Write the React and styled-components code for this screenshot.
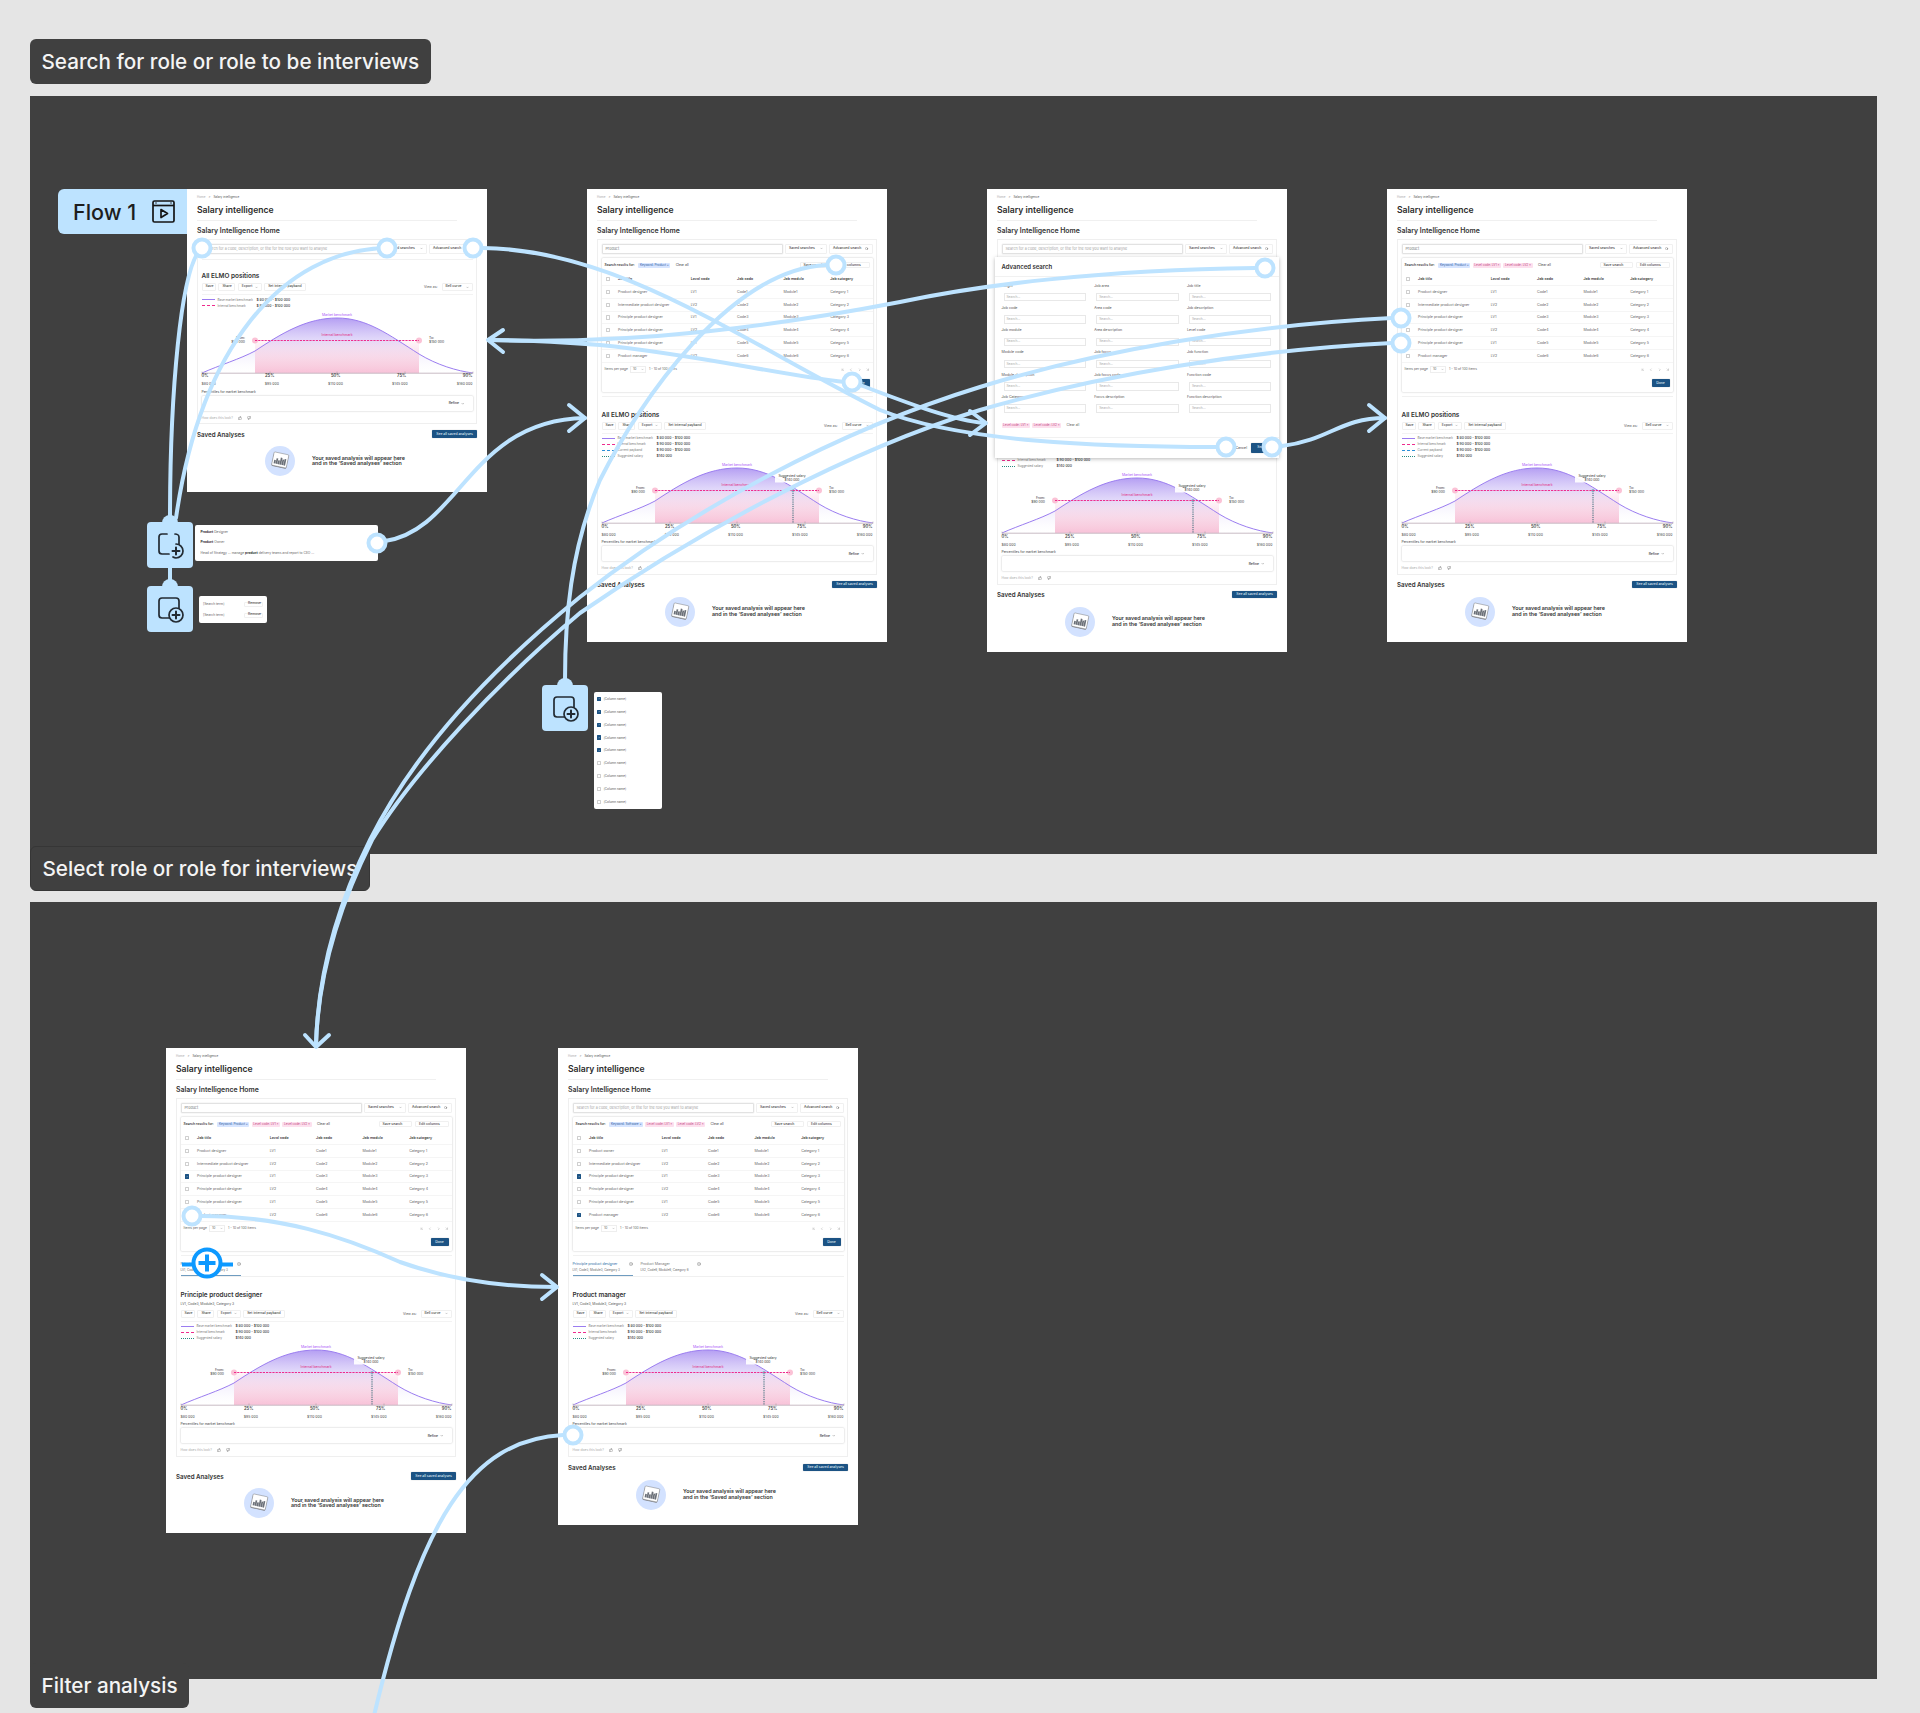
import React from 'react';
import styled, { createGlobalStyle, css } from 'styled-components';
import {
  ChevronDown, ChevronFirst, ChevronLast, ChevronLeft, ChevronRight,
  CircleX, Search, ThumbsDown, ThumbsUp, Check,
} from 'lucide-react';

const BLUE = '#BDE3FF';
const NAVY = '#1c5384';

const GlobalStyle = createGlobalStyle`
  html, body { margin: 0; padding: 0; background: #e5e5e5; }
  * { box-sizing: border-box; }
  body { font-family: Inter, "Liberation Sans", sans-serif; }
`;

const Page = styled.div`
  position: relative;
  width: 1920px;
  height: 1713px;
  padding-top: 39px;
  overflow: hidden;
  background: #e5e5e5;
`;

const SectionLabel = styled.div`
  position: relative;
  z-index: 2;
  width: fit-content;
  height: 45px;
  margin: ${props => props.$margin};
  padding: 0 11.5px;
  display: flex;
  align-items: center;
  background: #404040;
  border-radius: 6px;
  color: #f4f4f4;
  font-size: 20.7px;
  font-weight: 500;
  ${props => props.$edge && css`border: 1px solid #363636;`}
`;

const Section = styled.section`
  position: relative;
  margin-left: 30px;
  width: 1847px;
  height: ${props => props.$height}px;
  padding: ${props => props.$pad};
  display: flex;
  align-items: flex-start;
  gap: ${props => props.$gap}px;
  background: #404040;
`;

const Frame = styled.article`
  position: relative;
  flex-shrink: 0;
  width: 300px;
  padding: 6px 10px ${props => props.$bottom || 15}px;
  background: #fff;
  color: #2e2e2e;
`;

const Crumbs = styled.div`
  height: 4px;
  display: flex;
  align-items: center;
  gap: 3px;
  font-size: 3px;
  line-height: 4px;
  color: #555;
  span:first-child { color: #aaa; }
`;

const Title = styled.h1`
  margin: 6px 0 0;
  font-size: 8.6px;
  line-height: 10px;
  font-weight: 600;
  color: #2b2b2b;
`;

const Rule = styled.div`
  margin-top: 5px;
  width: 260px;
  height: 1px;
  background: #f0f0f0;
`;

const Subtitle = styled.h2`
  margin: 5.5px 0 0;
  font-size: 6.9px;
  line-height: 8px;
  font-weight: 600;
  color: #333;
`;

const Panel = styled.div`
  margin-top: 4.5px;
  width: 280px;
  padding: 3.5px;
  border: 1px solid #efefef;
`;

const SearchRow = styled.div`
  display: flex;
  gap: 2.5px;
  height: 10px;
`;

const SearchInput = styled.div`
  flex: 1;
  display: flex;
  align-items: center;
  padding-left: 3px;
  border: 1px solid #e2e2e2;
  border-radius: 1px;
  box-shadow: 0 0 1px rgba(0, 0, 0, .3);
  font-size: 3.7px;
  color: ${props => (props.$filled ? '#777' : '#a5a5a5')};
`;

const GhostButton = styled.button`
  flex: none;
  display: inline-flex;
  align-items: center;
  justify-content: space-between;
  gap: 1.5px;
  width: ${props => (props.$width ? `${props.$width}px` : 'auto')};
  height: ${props => props.$height || 8}px;
  padding: 0 3px;
  background: #fff;
  border: 1px solid #f0f0f0;
  border-radius: 1px;
  font: 500 3.4px/1 Inter, sans-serif;
  color: #444;
`;

const ResultsCard = styled.div`
  margin-top: 4px;
  height: 134px;
  border-radius: 1px;
  box-shadow: 0 0 2px rgba(0, 0, 0, .28);
`;

const ResultsHead = styled.div`
  height: 15.5px;
  padding: 0 3px;
  display: flex;
  align-items: center;
  gap: 2.3px;
  font-size: 3.4px;
  color: #444;
  b { font-weight: 600; margin-right: 1.5px; }
`;

const ClearAll = styled.span`
  margin-left: 3px;
`;

const Chip = styled.span`
  height: 5px;
  padding: 0 1.5px;
  display: inline-flex;
  align-items: center;
  font-size: 3.1px;
  border-radius: 1px;
  background: ${props => (props.$kind === 'blue' ? '#d7e5ff' : '#fde0ee')};
  color: ${props => (props.$kind === 'blue' ? '#2c5aa0' : '#c2477f')};
`;

const HeadRight = styled.div`
  margin-left: auto;
  display: flex;
  gap: 3px;
`;

const TableRow = styled.div`
  height: 12.85px;
  display: grid;
  grid-template-columns: 16.6px 72.7px 46.3px 46.4px 46.7px 1fr;
  align-items: center;
  border-bottom: 1px solid #f5f5f5;
  font-size: 3.6px;
  font-weight: ${props => (props.$head ? 600 : 400)};
  color: ${props => (props.$head ? '#444' : '#666')};
`;

const Box = styled.span`
  display: inline-flex;
  align-items: center;
  justify-content: center;
  width: 4.2px;
  height: 4.2px;
  margin-left: ${props => props.$inset || 0}px;
  border: 1px solid ${props => (props.$on ? NAVY : '#cfcfcf')};
  border-radius: .6px;
  background: ${props => (props.$on ? NAVY : '#fff')};
  color: #fff;
`;

const Pagination = styled.div`
  height: 13px;
  padding: 0 3px;
  display: flex;
  align-items: center;
  gap: 2.5px;
  font-size: 3.3px;
  color: #666;
`;

const PageSize = styled.span`
  width: 16px;
  height: 7px;
  padding: 0 1.5px;
  display: inline-flex;
  align-items: center;
  justify-content: space-between;
  border: 1px solid #eee;
`;

const Pager = styled.div`
  margin-left: auto;
  display: flex;
  gap: 4.8px;
  color: #777;
`;

const CardFoot = styled.div`
  padding: 3.5px 3px 0;
  display: flex;
  justify-content: flex-end;
`;

const SolidButton = styled.button`
  width: ${props => props.$width}px;
  height: ${props => props.$height || 8}px;
  padding: 0;
  border: 0;
  border-radius: 1px;
  background: ${NAVY};
  box-shadow: 0 0 1px rgba(0, 0, 0, .4);
  font: 500 3.4px/1 Inter, sans-serif;
  color: #dfe9f2;
`;

const PanelRule = styled.div`
  margin-top: ${props => props.$top}px;
  height: 1px;
  background: #f1f1f1;
`;

const TabRow = styled.div`
  display: flex;
  gap: 8px;
  padding-top: 6.5px;
  border-bottom: 1px solid #f0f0f0;
`;

const Tab = styled.div`
  position: relative;
  width: 60px;
  padding-bottom: 3px;
  border-bottom: 1px solid ${props => (props.$active ? '#6f9cc0' : 'transparent')};
  font-size: 3.6px;
  line-height: 4px;
  color: ${props => (props.$active ? '#2c6ea5' : '#777')};
  small { display: block; margin-top: 1.5px; font-size: 3px; line-height: 4px; color: #666; }
  svg { position: absolute; right: 0; top: 0; color: #666; }
`;

const Analysis = styled.div`
  padding-top: ${props => props.$top}px;
`;

const AnalysisTitle = styled.h3`
  margin: 0;
  font-size: 6.4px;
  line-height: 8px;
  font-weight: 600;
  color: #333;
`;

const AnalysisMeta = styled.div`
  margin-top: 3px;
  font-size: 3.4px;
  line-height: 4px;
  color: #555;
`;

const Toolbar = styled.div`
  margin-top: ${props => (props.$tight ? 4 : 3)}px;
  display: flex;
  align-items: center;
  gap: 2.4px;
  span { margin-left: auto; margin-right: 1.6px; font-size: 3.4px; color: #555; }
`;

const ToolRule = styled.div`
  margin-top: 3px;
  height: 1px;
  background: #f3f3f3;
`;

const Legend = styled.div`
  margin-top: 1.5px;
`;

const LegendRow = styled.div`
  height: 6px;
  display: grid;
  grid-template-columns: 16px 39px 1fr;
  align-items: center;
  font-size: 3.1px;
  color: #777;
  b { font-size: 3.4px; font-weight: 500; color: #333; }
`;

const LegendLine = styled.i`
  display: block;
  width: 13px;
  height: 0;
  border-top: 1px ${props => props.$dash} ${props => props.$color};
`;

const ChartSvg = styled.svg`
  display: block;
  overflow: visible;
  font-family: Inter, sans-serif;
`;

const Axis = styled.div`
  margin-top: ${props => props.$top}px;
  height: 4px;
  display: flex;
  justify-content: space-between;
  font-size: ${props => (props.$strong ? 4.2 : 3.5)}px;
  line-height: 4px;
  font-weight: ${props => (props.$strong ? 600 : 400)};
  color: #444;
`;

const Caption = styled.div`
  margin-top: 3.7px;
  font-size: 3.4px;
  line-height: 4px;
  color: #444;
`;

const RefineBox = styled.div`
  margin-top: 2.3px;
  height: 15px;
  padding-right: 8px;
  display: flex;
  align-items: center;
  justify-content: flex-end;
  gap: 2px;
  border-radius: 1px;
  box-shadow: 0 0 2px rgba(0, 0, 0, .28);
  font-size: 3.4px;
  font-weight: 500;
  color: #333;
`;

const Feedback = styled.div`
  margin-top: 5px;
  height: 4px;
  display: flex;
  align-items: center;
  gap: 5px;
  font-size: 3.3px;
  color: #aaa;
  svg { color: #666; }
`;

const SavedRow = styled.div`
  margin-top: ${props => props.$top}px;
  height: 7.5px;
  display: flex;
  align-items: center;
  justify-content: space-between;
  font-size: 6.2px;
  font-weight: 600;
  color: #333;
`;

const EmptyState = styled.div`
  margin-top: 8.5px;
  padding-left: 68px;
  display: flex;
  align-items: center;
  gap: 17px;
  font-size: 5.3px;
  line-height: 5.8px;
  font-weight: 600;
  color: #333;
`;

const AdvancedPopup = styled.div`
  position: absolute;
  left: 8px;
  top: 68px;
  width: 284px;
  height: 201px;
  background: #fff;
  box-shadow: 0 1px 4px rgba(0, 0, 0, .28);
`;

const PopupHead = styled.div`
  height: 20px;
  padding-left: 6.5px;
  display: flex;
  align-items: center;
  border-bottom: 1px solid #f1f1f1;
  font-size: 6px;
  font-weight: 600;
  color: #333;
`;

const PopupGrid = styled.div`
  padding: 6.5px 0 0 6.5px;
  display: grid;
  grid-template-columns: repeat(3, 92.7px);
  grid-auto-rows: 22.3px;
`;

const Field = styled.label`
  display: block;
  font-size: 3.6px;
  line-height: 5px;
  color: #555;
  div {
    margin: 4.5px 0 0 2px;
    width: 82.4px;
    height: 8.4px;
    padding-left: 2px;
    display: flex;
    align-items: center;
    border: 1px solid #e8e8e8;
    font-size: 3.3px;
    color: #aaa;
  }
`;

const PopupChips = styled.div`
  margin-top: 5.7px;
  padding-left: 6.5px;
  display: flex;
  align-items: center;
  gap: 2.2px;
  font-size: 3.3px;
  color: #555;
  span:last-child { margin-left: 3px; }
`;

const PopupFoot = styled.div`
  margin-top: 8.7px;
  height: 21px;
  padding: 5px 4px 0 0;
  display: flex;
  justify-content: flex-end;
  gap: 4px;
  border-top: 1px solid #f1f1f1;
  font-size: 3.5px;
  color: #444;
  span { line-height: 10px; }
`;

const FlowTag = styled.div`
  position: absolute;
  left: 28px;
  top: 93px;
  width: 129px;
  height: 45px;
  padding-left: 15px;
  display: flex;
  align-items: center;
  gap: 16px;
  background: ${BLUE};
  border-radius: 6px 0 0 6px;
  font-size: 21.5px;
  font-weight: 500;
  color: #1d1d1d;
`;

const Node = styled.div`
  position: absolute;
  left: ${props => props.$left}px;
  top: ${props => props.$top}px;
  width: 46px;
  height: 46px;
  background: ${BLUE};
  border-radius: 4px;
  &::before {
    content: '';
    position: absolute;
    left: 15px;
    top: -7px;
    width: 16px;
    height: 14px;
    border-radius: 8px 8px 0 0;
    background: ${BLUE};
  }
  svg { position: relative; display: block; }
`;

const Note = styled.div`
  position: absolute;
  left: ${props => props.$left}px;
  top: ${props => props.$top}px;
  width: ${props => props.$width}px;
  height: ${props => props.$height}px;
  padding-top: ${props => props.$padTop || 0}px;
  background: #fff;
  border-radius: 2px;
  font-size: 3.3px;
  color: #666;
`;

const MatchNote = styled(Note)`
  padding: 4.5px 5.5px;
  p { margin: 0 0 6.7px; line-height: 4px; }
  b { font-weight: 700; color: #333; }
`;

const TermRow = styled.div`
  height: 11px;
  padding: 0 4px 0 4px;
  display: flex;
  align-items: center;
  justify-content: space-between;
`;

const ColumnRow = styled.div`
  height: 12.85px;
  padding-left: 3px;
  display: flex;
  align-items: center;
  gap: 2.5px;
  font-size: 3.1px;
  color: #555;
`;

const Connectors = styled.svg`
  position: absolute;
  left: 0;
  top: 0;
  z-index: 5;
  pointer-events: none;
  fill: none;
  stroke: ${BLUE};
  stroke-width: 4;
  stroke-linecap: round;
  stroke-linejoin: round;
`;

const ROWS = [
  ['Product designer', 'LV1', 'Code1', 'Module1', 'Category 1'],
  ['Intermediate product designer', 'LV2', 'Code2', 'Module2', 'Category 2'],
  ['Principle product designer', 'LV1', 'Code3', 'Module3', 'Category 3'],
  ['Principle product designer', 'LV2', 'Code4', 'Module4', 'Category 4'],
  ['Principle product designer', 'LV1', 'Code5', 'Module5', 'Category 5'],
  ['Product manager', 'LV2', 'Code6', 'Module6', 'Category 6'],
];

const PLACEHOLDER = 'Search for a code, description, or title for the role you want to analyse';

const LEGEND = {
  base: ['Base market benchmark', '$ 80 000 - $100 000', 'solid', '#9b7df0'],
  internal: ['Internal benchmark', '$ 90 000 - $100 000', 'dashed', '#ee2c8d'],
  payband: ['Current payband', '$ 90 000 - $100 000', 'dashed', '#2b8fd8'],
  suggested: ['Suggested salary', '$140 000', 'dotted', '#2a8a80'],
};

const PERCENTS = ['0%', '25%', '50%', '75%', '90%'];
const VALUES = ['$80 000', '$95 000', '$110 000', '$145 000', '$160 000'];

const FILTER_CHIPS = [
  ['blue', 'Keyword: Product ×'],
  ['pink', 'Level code: LV1 ×'],
  ['pink', 'Level code: LV2 ×'],
];

const POPUP_FIELDS = [
  'Height', 'Job area', 'Job title',
  'Job code', 'Area code', 'Job description',
  'Job module', 'Area description', 'Level code',
  'Module code', 'Job focus', 'Job function',
  'Module description', 'Job focus code', 'Function code',
  'Job Category', 'Focus description', 'Function description',
];

const BellChart = ({ suggested, id }) => (
  <ChartSvg width="271" height="65" viewBox="0 0 271 65">
    <defs>
      <linearGradient id={`purple-${id}`} x1="0" y1="0" x2="0" y2="1">
        <stop offset="0" stopColor="#a78df0" stopOpacity=".85" />
        <stop offset="1" stopColor="#ffffff" stopOpacity=".1" />
      </linearGradient>
      <linearGradient id={`pink-${id}`} x1="0" y1="0" x2="0" y2="1">
        <stop offset="0" stopColor="#f9c6da" stopOpacity=".15" />
        <stop offset="1" stopColor="#f7bfd6" stopOpacity=".95" />
      </linearGradient>
    </defs>
    <path d="M0 64 C18 56 38 50 53 42 C80 24 105 9 135 9 C165 9 187 26 217 45 C235 56 255 62 271 64 Z" fill={`url(#purple-${id})`} />
    <rect x="53" y="31.5" width="164" height="32.7" fill={`url(#pink-${id})`} />
    <path d="M0 64 C18 56 38 50 53 42 C80 24 105 9 135 9 C165 9 187 26 217 45 C235 56 255 62 271 64" fill="none" stroke="#9b7df0" strokeWidth="1" />
    <path d="M0 64.2 H271" stroke="#c9bcc4" strokeWidth="1" />
    <path d="M0 62.5 V64.5 M68 62.5 V64.5 M135 62.5 V64.5 M203 62.5 V64.5 M271 62.5 V64.5" stroke="#888" strokeWidth=".4" />
    <circle cx="53" cy="31.5" r="3" fill="#fbc2d6" />
    <circle cx="217" cy="31.5" r="3" fill="#fbc2d6" />
    {suggested && <>
      <rect x="173" y="13.5" width="32" height="10" fill="#fff" opacity=".92" />
      <path d="M191 31.5 V64" stroke="#2f6672" strokeWidth="1" strokeDasharray="1.2 1" />
      <text x="190" y="18" textAnchor="middle" fontSize="3.3" fill="#333">Suggested salary</text>
      <text x="190" y="22" textAnchor="middle" fontSize="3.3" fill="#333">$140 000</text>
      <circle cx="191" cy="31.5" r="1.6" fill="#7fb6c4" />
    </>}
    <path d="M53 31.5 H217" stroke="#ee2c8d" strokeWidth="1" strokeDasharray="2.2 1" />
    <text x="135" y="6.6" textAnchor="middle" fontSize="3.4" fill="#a855f7">Market benchmark</text>
    <text x="135" y="27.4" textAnchor="middle" fontSize="3.4" fill="#e0247f">Internal benchmark</text>
    <text x="43" y="30" textAnchor="end" fontSize="3.4" fill="#333">From:</text>
    <text x="43" y="34" textAnchor="end" fontSize="3.4" fill="#333">$90 000</text>
    <text x="227" y="30" fontSize="3.4" fill="#333">To:</text>
    <text x="227" y="34" fontSize="3.4" fill="#333">$150 000</text>
  </ChartSvg>
);

// covered: the popup in frame 3 lies over the title and toolbar, so only the lower part is drawn
const AnalysisBlock = ({ id, heading = 'All ELMO positions', meta, legend, suggested, top, covered }) => (
  <Analysis $top={top}>
    {!covered && <>
      <AnalysisTitle>{heading}</AnalysisTitle>
      {meta && <AnalysisMeta>{meta}</AnalysisMeta>}
      <Toolbar $tight={!!meta}>
        <GhostButton $width={14.5}>Save</GhostButton>
        <GhostButton $width={17}>Share</GhostButton>
        <GhostButton $width={24}>Export <ChevronDown size={3} /></GhostButton>
        <GhostButton $width={41.5}>Set internal payband</GhostButton>
        <span>View as:</span>
        <GhostButton $width={31}>Bell curve <ChevronDown size={3} /></GhostButton>
      </Toolbar>
      <ToolRule />
    </>}
    <Legend>
      {legend.map(key => (
        <LegendRow key={key}>
          <LegendLine $dash={LEGEND[key][2]} $color={LEGEND[key][3]} />
          {LEGEND[key][0]}
          <b>{LEGEND[key][1]}</b>
        </LegendRow>
      ))}
    </Legend>
    <BellChart id={id} suggested={suggested} />
    <Axis $top={0.5} $strong>{PERCENTS.map(p => <span key={p}>{p}</span>)}</Axis>
    <Axis $top={4}>{VALUES.map(v => <span key={v}>{v}</span>)}</Axis>
    <Caption>Percentiles for market benchmark</Caption>
    <RefineBox>Refine <ChevronDown size={3.5} /></RefineBox>
    <Feedback>How does this look? <ThumbsUp size={4} /> <ThumbsDown size={4} /></Feedback>
  </Analysis>
);

const Results = ({ chips, rows, checked = [] }) => (
  <ResultsCard>
    <ResultsHead>
      <b>Search results for:</b>
      {chips.map(([kind, label]) => <Chip key={label} $kind={kind}>{label}</Chip>)}
      <ClearAll>Clear all</ClearAll>
      <HeadRight>
        <GhostButton $width={33.5} $height={6}>Save search</GhostButton>
        <GhostButton $width={33.5} $height={6}>Edit columns</GhostButton>
      </HeadRight>
    </ResultsHead>
    <TableRow $head>
      <Box $inset={4} />
      <span>Job title</span><span>Level code</span><span>Job code</span><span>Job module</span><span>Job category</span>
    </TableRow>
    {rows.map((row, index) => (
      <TableRow key={row[2]}>
        <Box $inset={4} $on={checked.includes(index)}>
          {checked.includes(index) && <Check size={3.4} strokeWidth={3} />}
        </Box>
        {row.map(cell => <span key={cell}>{cell}</span>)}
      </TableRow>
    ))}
    <Pagination>
      Items per page
      <PageSize>10 <ChevronDown size={3} /></PageSize>
      1 - 10 of 100 items
      <Pager>
        <ChevronFirst size={3.6} /><ChevronLeft size={3.6} /><ChevronRight size={3.6} /><ChevronLast size={3.6} />
      </Pager>
    </Pagination>
    <CardFoot><SolidButton $width={18}>Done</SolidButton></CardFoot>
  </ResultsCard>
);

const SalaryFrame = ({ query, children, savedTop = 6, bottom, popup }) => (
  <Frame $bottom={bottom}>
    <Crumbs><span>Home</span><span>&gt;</span><span>Salary intelligence</span></Crumbs>
    <Title>Salary intelligence</Title>
    <Rule />
    <Subtitle>Salary Intelligence Home</Subtitle>
    <Panel>
      <SearchRow>
        <SearchInput $filled={!!query}>{query || PLACEHOLDER}</SearchInput>
        <GhostButton $width={41.5} $height={10}>Saved searches <ChevronDown size={3} /></GhostButton>
        <GhostButton $width={43.5} $height={10}>Advanced search <Search size={3.4} /></GhostButton>
      </SearchRow>
      {children}
    </Panel>
    <SavedRow $top={savedTop}>
      Saved Analyses
      <SolidButton $width={45} $height={7.5}>See all saved analyses</SolidButton>
    </SavedRow>
    <EmptyState>
      <svg width="30" height="30" viewBox="0 0 30 30">
        <circle cx="15" cy="15" r="15" fill="#d3e2ff" />
        <g transform="rotate(12 15 15)">
          <rect x="7.5" y="8" width="15" height="13.5" rx="1" fill="#8b8f98" />
          <rect x="7.5" y="7.2" width="15" height="13.5" rx="1" fill="#fff" stroke="#666" strokeWidth=".4" />
          <path d="M10 18.5 V15 M12 18.5 V13 M14 18.5 V14.5 M16 18.5 V11.5 M18 18.5 V13 M20 18.5 V12" stroke="#6b7078" strokeWidth="1.7" />
        </g>
      </svg>
      <div>Your saved analysis will appear here<br />and in the ‘Saved analyses’ section</div>
    </EmptyState>
    {popup}
  </Frame>
);

const Popup = () => (
  <AdvancedPopup>
    <PopupHead>Advanced search</PopupHead>
    <PopupGrid>
      {POPUP_FIELDS.map(label => (
        <Field key={label}>{label}<div>Search...</div></Field>
      ))}
    </PopupGrid>
    <PopupChips>
      <Chip>Level code: LV1 ×</Chip>
      <Chip>Level code: LV2 ×</Chip>
      <span>Clear all</span>
    </PopupChips>
    <PopupFoot>
      <span>Cancel</span>
      <SolidButton $width={24} $height={10}>Search</SolidButton>
    </PopupFoot>
  </AdvancedPopup>
);

const AddIcon = ({ partial }) => (
  <svg width="46" height="46" viewBox="0 0 46 46" fill="none" stroke="#232b33" strokeWidth="1.7" strokeLinecap="round">
    {partial ? <>
      <path d="M20 12 H15 a3 3 0 0 0 -3 3 V29 a3 3 0 0 0 3 3 H22" />
      <path d="M28 12 a4 3 0 0 1 4 3 V22" />
      <path d="M29 22 a7 7 0 0 1 0 14 a7 7 0 0 1 -3 -1" />
    </> : <>
      <path d="M22 32 H15 a3 3 0 0 1 -3 -3 V15 a3 3 0 0 1 3 -3 H29 a3 3 0 0 1 3 3 V22" />
      <circle cx="29" cy="29" r="7" />
    </>}
    <path d="M29 25.5 V32.5 M25.5 29 H32.5" strokeWidth="2" />
  </svg>
);

const Handle = ({ x, y }) => <circle cx={x} cy={y} r="8.5" fill="#fff" />;

const LINES = [
  'M202 248 C180 265 170 400 170 518',
  'M387 248 C280 250 200 350 176 518',
  'M170 567 V586',
  'M385 541 C460 530 470 420 585 418',
  'M826 265 C730 270 640 400 600 480 C570 550 565 620 565 680',
  'M483 248 C620 250 740 340 880 410 C960 442 1100 447 1217 447',
  'M1255 268 C1100 270 980 285 900 302 C780 325 640 345 489 340',
  'M845 382 C780 375 700 355 600 345 C560 342 520 340 489 340',
  'M860 385 C900 400 950 420 985 423',
  'M1282 446 C1330 440 1340 418 1385 418',
  'M1392 318 C1250 325 1100 350 980 387 C840 430 690 510 580 597 C490 670 415 750 370 840 C340 900 318 970 316 1045',
  'M1392 343 C1250 350 1100 375 980 410 C850 450 700 530 580 613 C500 680 415 770 372 840 C342 900 318 970 316 1045',
  'M200 1216 C280 1216 340 1235 400 1262 C450 1280 500 1287 556 1287',
  'M563 1435 C470 1440 420 1520 373 1720',
];

const ARROWS = [
  'M503 330 L488 340 L503 352',
  'M569 405 L585 418 L569 431',
  'M970 411 L986 423 L970 435',
  'M1369 405 L1385 418 L1369 431',
  'M305 1035 L316 1047 L329 1035',
  'M542 1275 L557 1287 L542 1299',
];

const HANDLES = [
  [202, 248], [387, 248], [473, 248], [377, 543], [836, 265], [852, 382],
  [1265, 268], [1226, 447], [1272, 447], [1401, 318], [1401, 343], [192, 1216], [573, 1435],
];

const App = () => (
  <Page>
    <GlobalStyle />
    <SectionLabel $margin="0 0 12px 30px">Search for role or role to be interviews</SectionLabel>
    <Section $height={758} $pad="93px 0 0 157px" $gap={100}>
      <FlowTag>
        Flow 1
        <svg width="23" height="23" viewBox="0 0 23 23" fill="none" stroke="#151515" strokeWidth="1.7" strokeLinejoin="round">
          <rect x="1" y="1" width="21" height="21" rx="1.5" />
          <path d="M1 5.5 H22" />
          <path d="M3.5 3 H4.5 M18.5 3 H19.5" />
          <path d="M9 9.5 L15.5 13.5 L9 17.5 Z" />
        </svg>
      </FlowTag>
      <SalaryFrame bottom={16}>
        <PanelRule $top={5} />
        <AnalysisBlock id="f1" top={12.5} legend={['base', 'internal']} />
      </SalaryFrame>
      <SalaryFrame query="Product">
        <Results chips={FILTER_CHIPS.slice(0, 1)} rows={ROWS} />
        <PanelRule $top={4} />
        <AnalysisBlock id="f2" top={14} legend={['base', 'internal', 'payband', 'suggested']} suggested />
      </SalaryFrame>
      <SalaryFrame popup={<Popup />}>
        <AnalysisBlock id="f3" covered top={202} legend={['internal', 'suggested']} suggested />
      </SalaryFrame>
      <SalaryFrame query="Product">
        <Results chips={FILTER_CHIPS} rows={ROWS} />
        <PanelRule $top={4} />
        <AnalysisBlock id="f4" top={14} legend={['base', 'internal', 'payband', 'suggested']} suggested />
      </SalaryFrame>

      <Node $left={117} $top={426}><AddIcon partial /></Node>
      <MatchNote $left={165} $top={429} $width={183} $height={36}>
        <p><b>Product</b> Designer</p>
        <p><b>Product</b> Owner</p>
        <p>Head of Strategy ... manage <b>product</b> delivery teams and report to CEO ...</p>
      </MatchNote>
      <Node $left={117} $top={490}><AddIcon /></Node>
      <Note $left={169} $top={500} $width={68} $height={27} $padTop={2.5}>
        {[0, 1].map(i => (
          <TermRow key={i}>[Search term]<GhostButton $width={19} $height={5}>Remove</GhostButton></TermRow>
        ))}
      </Note>
      <Node $left={512} $top={589}><AddIcon /></Node>
      <Note $left={564} $top={596} $width={68} $height={117} $padTop={0.6}>
        {[0, 1, 2, 3, 4, 5, 6, 7, 8].map(i => (
          <ColumnRow key={i}>
            <Box $on={i < 5}>{i < 5 && <Check size={3.4} strokeWidth={3} />}</Box>
            [Column name]
          </ColumnRow>
        ))}
      </Note>
    </Section>

    <SectionLabel $margin="-8px 0 11px 30px" $edge>Select role or role for interviews</SectionLabel>
    <Section $height={777} $pad="146px 0 0 136px" $gap={92}>
      <SalaryFrame query="Product" savedTop={15.5}>
        <Results chips={FILTER_CHIPS} rows={ROWS} checked={[2]} />
        <PanelRule $top={4} />
        <TabRow>
          <Tab $active>
            Principle product designer <CircleX size={4} />
            <small>LV1, Code3, Module3, Category 3</small>
          </Tab>
        </TabRow>
        <AnalysisBlock id="f5" top={14} heading="Principle product designer" meta="LV1, Code3, Module3, Category 3" legend={['base', 'internal', 'suggested']} suggested />
      </SalaryFrame>
      <SalaryFrame savedTop={7}>
        <Results
          chips={[['blue', 'Keyword: Software ×'], FILTER_CHIPS[1], FILTER_CHIPS[2]]}
          rows={[['Product owner', 'LV1', 'Code1', 'Module1', 'Category 1'], ...ROWS.slice(1)]}
          checked={[2, 5]}
        />
        <PanelRule $top={4} />
        <TabRow>
          <Tab $active>
            Principle product designer <CircleX size={4} />
            <small>LV1, Code3, Module3, Category 3</small>
          </Tab>
          <Tab>
            Product Manager <CircleX size={4} />
            <small>LV2, Code6, Module6, Category 6</small>
          </Tab>
        </TabRow>
        <AnalysisBlock id="f6" top={14} heading="Product manager" meta="LV1, Code3, Module3, Category 3" legend={['base', 'internal', 'suggested']} suggested />
      </SalaryFrame>
    </Section>
    <SectionLabel $margin="-16px 0 0 30px">Filter analysis</SectionLabel>

    <Connectors width="1920" height="1713" viewBox="0 0 1920 1713">
      {LINES.map(d => <path key={d} d={d} />)}
      {ARROWS.map(d => <path key={d} d={d} />)}
      {HANDLES.map(([x, y]) => <Handle key={`${x}-${y}`} x={x} y={y} />)}
      <path d="M182 1264.5 H233" stroke="#0d99ff" strokeWidth="4" strokeLinecap="butt" />
      <circle cx="207" cy="1263" r="13.5" fill="#fff" stroke="#0d99ff" />
      <path d="M207 1254.5 V1271.5 M198.5 1263 H215.5" stroke="#0d99ff" strokeWidth="4" strokeLinecap="butt" />
    </Connectors>
  </Page>
);

export default App;
